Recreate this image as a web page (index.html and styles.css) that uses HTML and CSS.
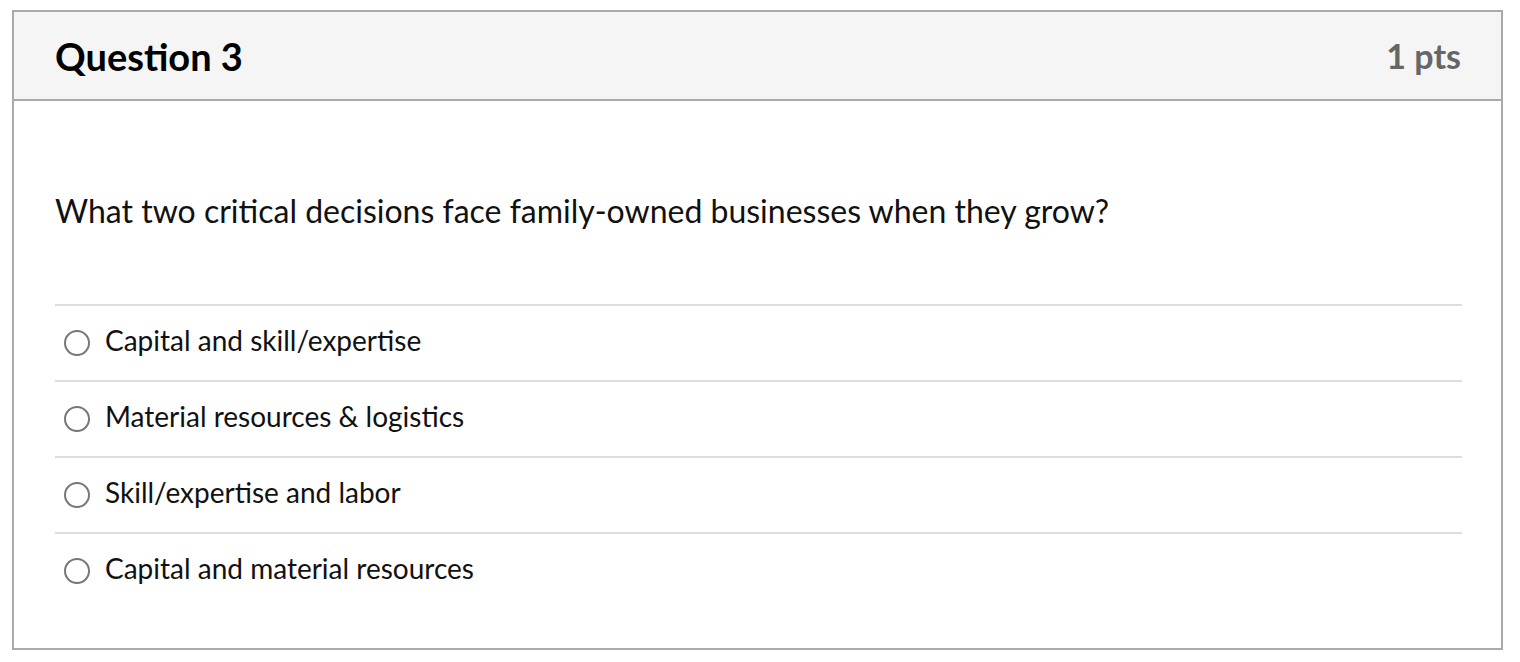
FILE: index.html
```html
<!DOCTYPE html>
<html>
<head>
<meta charset="utf-8">
<link rel="stylesheet" href="styles.css">
</head>
<body>
<div class="question">
  <div class="header">
    <div class="title">Question 3</div>
    <div class="points">1 pts</div>
  </div>
  <div class="content">
    <div class="text">What two critical decisions face family-owned businesses when they grow?</div>
    <div class="answers">
      <div class="answer"><span class="radio"></span><span class="label">Capital and skill/expertise</span></div>
      <div class="answer"><span class="radio"></span><span class="label">Material resources &amp; logistics</span></div>
      <div class="answer"><span class="radio"></span><span class="label">Skill/expertise and labor</span></div>
      <div class="answer"><span class="radio"></span><span class="label">Capital and material resources</span></div>
    </div>
  </div>
</div>
</body>
</html>
```
FILE: styles.css
```css
html, body {
  margin: 0;
  padding: 0;
  background: #fff;
}
body {
  font-family: Lato, "Open Sans", sans-serif;
  color: #111;
}
.question {
  margin: 10px 17px 0 12px;
  height: 640px;
  box-sizing: border-box;
  border: 2px solid #aaaaaa;
}
.header {
  height: 87px;
  background: #f5f5f5;
  border-bottom: 2px solid #aaaaaa;
  display: flex;
  align-items: center;
  justify-content: space-between;
  padding: 0 40px 0 41px;
}
.title {
  font-size: 38px;
  font-weight: 700;
  color: #000;
  line-height: 40px;
}
.points {
  font-size: 34px;
  font-weight: 700;
  color: #666;
  line-height: 40px;
}
.content {
  padding: 0 39px 0 41px;
}
.text {
  font-size: 32px;
  color: #111;
  padding-top: 90px;
  height: 111px;
  box-sizing: border-box;
  line-height: 40px;
  margin-bottom: 92px;
}
.answer {
  display: flex;
  align-items: center;
  height: 74px;
  border-top: 2px solid #dddddd;
}
.radio {
  width: 22px;
  height: 22px;
  border: 2px solid #777;
  border-radius: 50%;
  margin-left: 9px;
  margin-right: 15px;
  flex: none;
  box-sizing: content-box;
}
.label {
  font-size: 28px;
  color: #111;
  line-height: 34px;
  position: relative;
  top: -3px;
}
```
